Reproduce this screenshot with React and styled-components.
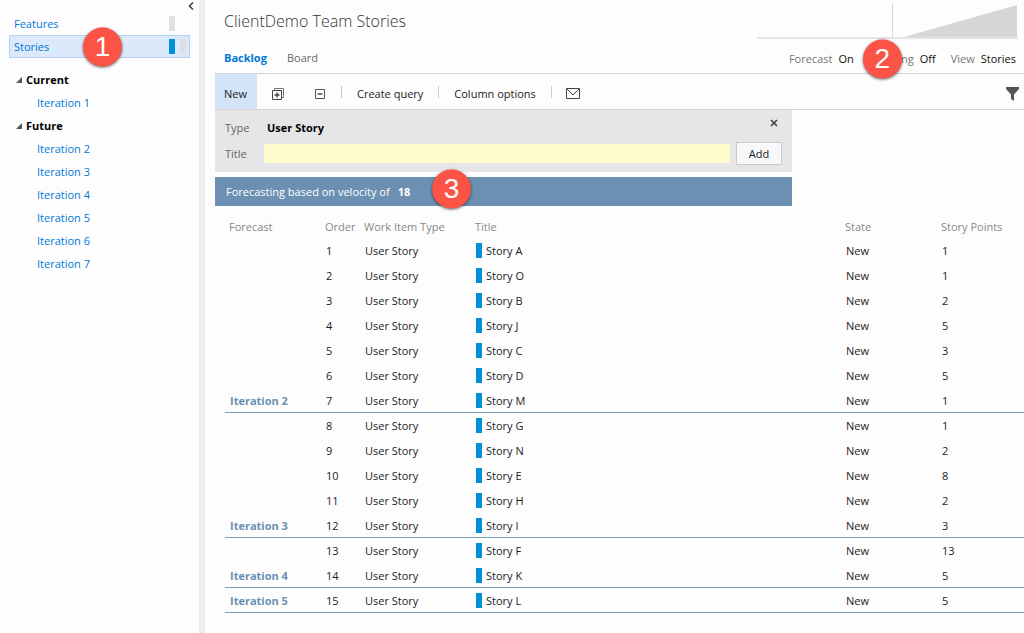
import styled, { createGlobalStyle } from "styled-components";
import { useState } from "react";

const iterations = [2, 3, 4, 5, 6, 7];

const stories = [
  { title: "Story A", points: 1 },
  { title: "Story O", points: 1 },
  { title: "Story B", points: 2 },
  { title: "Story J", points: 5 },
  { title: "Story C", points: 3 },
  { title: "Story D", points: 5 },
  { title: "Story M", points: 1, forecast: "Iteration 2" },
  { title: "Story G", points: 1 },
  { title: "Story N", points: 2 },
  { title: "Story E", points: 8 },
  { title: "Story H", points: 2 },
  { title: "Story I", points: 3, forecast: "Iteration 3" },
  { title: "Story F", points: 13 },
  { title: "Story K", points: 5, forecast: "Iteration 4" },
  { title: "Story L", points: 5, forecast: "Iteration 5" },
];

function TreeGroup({ label, children }) {
  const [open, setOpen] = useState(true);

  return (
    <>
      <GroupButton
        type="button"
        aria-expanded={open}
        onClick={() => setOpen(!open)}
      >
        <svg width="6" height="6" viewBox="0 0 6 6">
          <path d="M6 0V6H0Z" fill="#555" />
        </svg>
        {label}
      </GroupButton>
      {open && children}
    </>
  );
}

function Sidebar() {
  return (
    <Side>
      <CollapseButton type="button" aria-label="Collapse">
        <svg width="6" height="8" viewBox="0 0 6 8">
          <path d="M5 0.5L1.5 4L5 7.5" fill="none" stroke="#444" strokeWidth="1.6" />
        </svg>
      </CollapseButton>
      <LevelLink href="#features">
        Features
        <Marks>
          <Mark $color="#e0e0e1" />
        </Marks>
      </LevelLink>
      <LevelLink href="#stories" $selected>
        Stories
        <Marks>
          <Mark $color="#008fd9" />
          <Mark $color="#dddde2" />
        </Marks>
        <Badge $left="73px">1</Badge>
      </LevelLink>
      <Tree>
        <TreeGroup label="Current">
          <IterationLink href="#iteration-1">Iteration 1</IterationLink>
        </TreeGroup>
        <TreeGroup label="Future">
          {iterations.map((n) => (
            <IterationLink key={n} href={"#iteration-" + n}>
              Iteration {n}
            </IterationLink>
          ))}
        </TreeGroup>
      </Tree>
    </Side>
  );
}

function Toolbar() {
  return (
    <Bar>
      <BarButton type="button" $active>
        New
      </BarButton>
      <IconButton type="button" aria-label="Expand one level">
        <svg width="12" height="12" viewBox="0 0 12 12" fill="none" stroke="#444">
          <path d="M2.5 2V0.5H11.5V9.5H10" stroke="#777" />
          <path d="M0.5 2.5H9.5V11.5H0.5Z" />
          <path d="M2.5 7H7.5M5 4.5V9.5" strokeWidth="1.4" />
        </svg>
      </IconButton>
      <IconButton type="button" aria-label="Collapse one level">
        <svg width="10" height="10" viewBox="0 0 10 10" fill="none" stroke="#555">
          <path d="M0.5 0.5H9.5V9.5H0.5Z" />
          <path d="M2.5 5H7.5" strokeWidth="1.6" />
        </svg>
      </IconButton>
      <Separator />
      <BarButton type="button">Create query</BarButton>
      <Separator />
      <BarButton type="button">Column options</BarButton>
      <Separator />
      <IconButton type="button" aria-label="Email">
        <svg width="14" height="11" viewBox="0 0 14 11" fill="none" stroke="#444">
          <path d="M0.5 0.5H13.5V10.5H0.5Z" />
          <path d="M1 1L7 7L13 1" />
        </svg>
      </IconButton>
      <FilterButton type="button" aria-label="Filter">
        <svg width="13" height="14" viewBox="0 0 13 14">
          <path d="M0 0H13V2L8 7.5V14L5 12V7.5L0 2Z" fill="#555" />
        </svg>
      </FilterButton>
    </Bar>
  );
}

function AddPanel() {
  const [title, setTitle] = useState("");

  return (
    <Panel onSubmit={(event) => event.preventDefault()}>
      <PanelLabel as="span">Type</PanelLabel>
      <TypeName>User Story</TypeName>
      <CloseButton type="button" aria-label="Close">
        <svg width="8" height="8" viewBox="0 0 8 8">
          <path d="M1 1L7 7M7 1L1 7" stroke="#444" strokeWidth="1.7" />
        </svg>
      </CloseButton>
      <PanelLabel htmlFor="title">Title</PanelLabel>
      <TitleInput
        id="title"
        type="text"
        value={title}
        onChange={(event) => setTitle(event.target.value)}
      />
      <AddButton type="submit">Add</AddButton>
    </Panel>
  );
}

function Backlog() {
  return (
    <Table>
      <colgroup>
        <Col $width="96px" />
        <Col $width="39px" />
        <Col $width="111px" />
        <Col />
        <Col $width="96px" />
        <Col $width="87px" />
      </colgroup>
      <thead>
        <tr>
          <Th>Forecast</Th>
          <Th>Order</Th>
          <Th>Work Item Type</Th>
          <Th>Title</Th>
          <Th>State</Th>
          <Th>Story Points</Th>
        </tr>
      </thead>
      <tbody>
        {stories.map((story, i) => (
          <Row key={story.title} $line={story.forecast}>
            <ForecastCell>{story.forecast}</ForecastCell>
            <Td>{i + 1}</Td>
            <Td>User Story</Td>
            <Td>
              <StoryTitle>
                <Mark $color="#008fd9" />
                {story.title}
              </StoryTitle>
            </Td>
            <Td>New</Td>
            <Td>{story.points}</Td>
          </Row>
        ))}
      </tbody>
    </Table>
  );
}

export default function App() {
  return (
    <>
      <GlobalStyle />
      <Page>
        <Sidebar />
        <Splitter />
        <Main>
          <TitleRow>
            <Title>ClientDemo Team Stories</Title>
            <svg width="261" height="40" viewBox="0 0 261 40">
              <path d="M0 38H261" stroke="#e4e4e6" strokeWidth="2" />
              <path d="M135.5 3V37" stroke="#d8d8da" />
              <path d="M147 37L260 5V37Z" fill="#d6d5d8" />
            </svg>
          </TitleRow>
          <TabRow>
            <Tab href="#backlog" $active>
              Backlog
            </Tab>
            <Tab href="#board">Board</Tab>
            <Options>
              <Option>
                Forecast <OptionButton type="button">On</OptionButton>
              </Option>
              <Option>
                Mapping <OptionButton type="button">Off</OptionButton>
                <Badge $left="-6px">2</Badge>
              </Option>
              <Option>
                View <OptionButton type="button">Stories</OptionButton>
              </Option>
            </Options>
          </TabRow>
          <Toolbar />
          <AddPanel />
          <Velocity>
            Forecasting based on velocity of <strong>18</strong>
            <Badge $left="217px" $top="40%">3</Badge>
          </Velocity>
          <Backlog />
        </Main>
      </Page>
    </>
  );
}

const GlobalStyle = createGlobalStyle`
  * {
    box-sizing: border-box;
  }

  body {
    margin: 0;
    background-color: #fdfdfd;
    color: #1c1c1c;
    font-family: "Open Sans", "Noto Sans", sans-serif;
    font-size: 11px;
    line-height: 16px;
  }

  button, input {
    font: inherit;
    color: inherit;
    border: none;
    padding: 0;
    background: none;
  }

  button {
    cursor: pointer;
  }

  a {
    text-decoration: none;
  }

  svg {
    display: block;
    flex: none;
  }
`;

const Page = styled.div`
  display: grid;
  grid-template-columns: 199px 6px minmax(0, 1fr);
  min-height: 100vh;
`;

const Side = styled.nav`
  display: flex;
  flex-direction: column;
  padding: 0 9px;
`;

const CollapseButton = styled.button`
  display: flex;
  align-self: flex-end;
  align-items: center;
  height: 12px;
  margin-right: -4px;
`;

const Splitter = styled.div`
  background-color: #edecef;
`;

const LevelLink = styled.a`
  position: relative;
  display: flex;
  align-items: center;
  height: 23px;
  padding: 0 3px 0 4px;
  border: 1px solid ${(props) => (props.$selected ? "#b5d0f3" : "transparent")};
  background-color: ${(props) => (props.$selected ? "#dbe9fa" : "transparent")};
  color: #0078d7;
`;

const Marks = styled.span`
  display: flex;
  gap: 5px;
  width: 17px;
  margin-left: auto;
`;

const Mark = styled.span`
  width: 6px;
  height: 15px;
  flex: none;
  background-color: ${(props) => props.$color};
`;

const Badge = styled.span`
  position: absolute;
  top: ${(props) => props.$top || "50%"};
  left: ${(props) => props.$left};
  display: flex;
  justify-content: center;
  align-items: center;
  width: 39px;
  height: 39px;
  transform: translateY(-50%);
  border-radius: 50%;
  background-color: #fb5345;
  box-shadow: 0 1px 3px rgba(0, 0, 0, 0.6);
  color: #ffffff;
  font-family: "Liberation Sans", sans-serif;
  font-size: 28px;
  font-weight: 400;
`;

const Tree = styled.div`
  display: flex;
  flex-direction: column;
  margin-top: 10px;
`;

const GroupButton = styled.button`
  display: flex;
  align-items: center;
  gap: 4px;
  height: 23px;
  padding-left: 7px;
  color: #000000;
  font-weight: 700;
`;

const IterationLink = styled.a`
  height: 23px;
  padding-left: 28px;
  color: #0078d7;
  line-height: 23px;
`;

const Main = styled.main`
  padding-left: 10px;
`;

const TitleRow = styled.header`
  display: flex;
  justify-content: space-between;
  height: 42px;
  padding: 0 6px 0 9px;
`;

const Title = styled.h1`
  margin: 0;
  color: #333333;
  font-size: 16px;
  font-weight: 300;
  line-height: 42px;
`;

const TabRow = styled.div`
  display: flex;
  align-items: center;
  gap: 20px;
  height: 31px;
  padding: 0 8px 0 9px;
`;

const Tab = styled.a`
  color: ${(props) => (props.$active ? "#0078d7" : "#666666")};
  font-weight: ${(props) => (props.$active ? 700 : 400)};
`;

const Options = styled.div`
  display: flex;
  gap: 15px;
  margin-left: auto;
  padding-top: 2px;
`;

const Option = styled.span`
  position: relative;
  display: flex;
  gap: 6px;
  color: #777777;
`;

const OptionButton = styled.button`
  color: #111111;
`;

const Bar = styled.div`
  display: flex;
  align-items: center;
  height: 37px;
  border-top: 1px solid #d4d4d8;
  border-bottom: 1px solid #d4d4d8;
`;

const BarButton = styled.button`
  height: 35px;
  padding: ${(props) => (props.$active ? "4px 10px 0 9px" : "4px 15px 0")};
  background-color: ${(props) => (props.$active ? "#d3e3f8" : "transparent")};
`;

const IconButton = styled.button`
  display: flex;
  justify-content: center;
  align-items: center;
  width: 42px;
  height: 35px;
  padding-top: 4px;
`;

const Separator = styled.span`
  width: 1px;
  height: 12px;
  background-color: #cccccc;
`;

const FilterButton = styled(IconButton)`
  justify-content: flex-end;
  margin-left: auto;
  padding-right: 5px;
`;

const Panel = styled.form`
  display: grid;
  grid-template-columns: 33px minmax(0, 1fr) 46px;
  grid-template-rows: 24px 23px;
  align-items: center;
  column-gap: 6px;
  row-gap: 2px;
  max-width: 577px;
  height: 62px;
  padding: 6px 10px;
  background-color: #e6e5e8;
`;

const PanelLabel = styled.label`
  color: #666666;
`;

const TypeName = styled.strong`
  padding-left: 3px;
  color: #000000;
`;

const CloseButton = styled.button`
  display: flex;
  justify-self: end;
  align-self: start;
  padding: 3px 4px;
`;

const TitleInput = styled.input`
  width: 100%;
  height: 19px;
  padding: 0 4px;
  background-color: #fffacb;
`;

const AddButton = styled.button`
  height: 23px;
  border: 1px solid #cccccc;
  background-color: #f8f8fa;
`;

const Velocity = styled.div`
  position: relative;
  display: flex;
  align-items: center;
  gap: 8px;
  max-width: 577px;
  height: 29px;
  margin-top: 5px;
  padding-left: 11px;
  background-color: #6b90b2;
  color: #ffffff;
`;

const Table = styled.table`
  width: calc(100% - 10px);
  margin: 8px 0 0 10px;
  border-spacing: 0;
  table-layout: fixed;
`;

const Col = styled.col`
  width: ${(props) => props.$width || "auto"};
`;

const Th = styled.th`
  height: 24px;
  padding: 1px 0 0 4px;
  color: #888888;
  font-weight: 400;
  text-align: left;
  white-space: nowrap;
`;

const Td = styled.td`
  height: 25px;
  padding: 1px 0 0 5px;
`;

const ForecastCell = styled(Td)`
  color: #6b90b2;
  font-weight: 700;
`;

const StoryTitle = styled.div`
  display: flex;
  align-items: center;
  gap: 4px;
`;

const Row = styled.tr`
  td {
    border-bottom: 1px solid ${(props) => (props.$line ? "#7ba3bf" : "transparent")};
  }
`;
